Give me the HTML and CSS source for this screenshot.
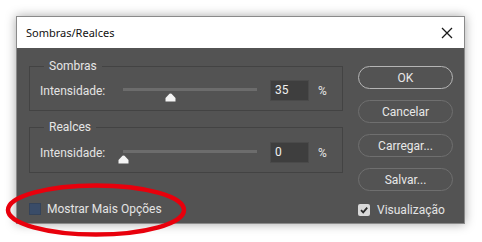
FILE: index.html
```html
<!DOCTYPE html>
<html>
<head>
<meta charset="utf-8">
<link rel="stylesheet" href="styles.css">
</head>
<body>
<div class="stage">
  <div class="dialog">
    <div class="titlebar">
      <span class="title">Sombras/Realces</span>
      <svg class="close" width="12" height="12" viewBox="0 0 12 12"><path d="M1 1 L11 11 M11 1 L1 11" stroke="#1a1a1a" stroke-width="1.3" fill="none"/></svg>
    </div>
    <div class="body">
      <div class="left">
        <fieldset class="group g1">
          <legend>Sombras</legend>
          <div class="row">
            <span class="label">Intensidade:</span>
            <div class="slider">
              <div class="track"></div>
              <svg class="thumb" style="left: 35%" width="11" height="9" viewBox="0 0 11 9"><path d="M0.5 8.5 V5 L4.5 0.8 Q5.5 0 6.5 0.8 L10.5 5 V8.5 Z" fill="#f4f4f4"/></svg>
            </div>
            <div class="num">35</div>
            <span class="pct">%</span>
          </div>
        </fieldset>
        <fieldset class="group g2">
          <legend>Realces</legend>
          <div class="row">
            <span class="label">Intensidade:</span>
            <div class="slider">
              <div class="track"></div>
              <svg class="thumb" style="left: 0%" width="11" height="9" viewBox="0 0 11 9"><path d="M0.5 8.5 V5 L4.5 0.8 Q5.5 0 6.5 0.8 L10.5 5 V8.5 Z" fill="#f4f4f4"/></svg>
            </div>
            <div class="num">0</div>
            <span class="pct">%</span>
          </div>
        </fieldset>
        <div class="check more">
          <span class="box blue"></span>
          <span>Mostrar Mais Opções</span>
        </div>
      </div>
      <div class="right">
        <div class="btn primary">OK</div>
        <div class="btn">Cancelar</div>
        <div class="btn">Carregar...</div>
        <div class="btn">Salvar...</div>
        <div class="check preview">
          <span class="box light"><svg width="10" height="10" viewBox="0 0 10 10"><path d="M2 5.2 L4.2 7.4 L8.2 2.6" stroke="#2a2a2a" stroke-width="1.8" fill="none"/></svg></span>
          <span>Visualização</span>
        </div>
      </div>
    </div>
  </div>
  <svg class="annot" width="190" height="60" viewBox="0 0 190 60"><ellipse cx="92" cy="28" rx="88" ry="24.5" fill="none" stroke="#e8000c" stroke-width="4.5"/></svg>
</div>
</body>
</html>
```
FILE: styles.css
```css
html, body {
  margin: 0;
  padding: 0;
  background: #ffffff;
}
.stage {
  position: relative;
  width: 482px;
  height: 242px;
  overflow: hidden;
  padding: 16px 0 0 16px;
  box-sizing: border-box;
}
.dialog {
  width: 449px;
  height: 208px;
  box-sizing: border-box;
  border: 1px solid #8a8a8a;
  box-shadow: 0 0 10px rgba(0,0,0,0.35);
  display: flex;
  flex-direction: column;
  font-family: Roboto, "Noto Sans", sans-serif;
}
.titlebar {
  height: 31px;
  background: #ffffff;
  display: flex;
  align-items: center;
  justify-content: space-between;
  padding: 0 10px 0 9px;
}
.title {
  font-family: "Noto Sans", "Open Sans", sans-serif;
  font-size: 11px;
  color: #111;
}
.close { margin-right: 1px; }
.body {
  flex: 1;
  background: #535353;
  display: flex;
  padding: 10px 11px 0 12px;
  gap: 15px;
  color: #e4e4e4;
  font-size: 12px;
}
.left {
  width: 314px;
  display: flex;
  flex-direction: column;
}
.group {
  margin: 0;
  border: 1px solid #434343;
  padding: 6px 10px 9px 10px;
}
.g2 { margin-top: 8px; padding-top: 7px; }
.group legend {
  margin-left: 4px;
  padding: 0 5px;
  line-height: 16px;
  font-size: 12px;
  color: #e6e6e6;
}
.row {
  display: flex;
  align-items: center;
  height: 21px;
}
.label {
  width: 83px;
  flex: none;
}
.slider {
  position: relative;
  width: 134px;
  height: 21px;
  flex: none;
}
.track {
  position: absolute;
  left: 0;
  right: 0;
  top: 8px;
  height: 3px;
  background: #6c6c6c;
}
.thumb {
  position: absolute;
  top: 13px;
  margin-left: -5px;
}
.num {
  margin-left: 13px;
  width: 39px;
  height: 21px;
  box-sizing: border-box;
  background: #3e3e3e;
  border: 1px solid #4a4a4a;
  padding-left: 4px;
  line-height: 19px;
  color: #f0f0f0;
}
.pct {
  margin-left: 9px;
}
.check {
  display: flex;
  align-items: center;
  gap: 6px;
  height: 16px;
}
.more { margin-top: 28px; }
.box {
  width: 12px;
  height: 12px;
  box-sizing: border-box;
  display: flex;
  align-items: center;
  justify-content: center;
}
.box.blue {
  background: #3a4c68;
  border: 1px solid #34435a;
}
.box.light {
  background: #d9d9d9;
  border-radius: 2px;
}
.right {
  width: 95px;
  padding-top: 8px;
  display: flex;
  flex-direction: column;
  gap: 11px;
}
.btn {
  height: 23px;
  box-sizing: border-box;
  border: 1px solid #6f6f6f;
  border-radius: 12px;
  display: flex;
  align-items: center;
  justify-content: center;
  color: #e8e8e8;
  font-size: 12px;
}
.btn.primary {
  border-color: #b5b5b5;
}
.preview {
  margin-top: 0px;
  gap: 7px;
}
.annot {
  position: absolute;
  left: 4px;
  top: 182px;
}
```
